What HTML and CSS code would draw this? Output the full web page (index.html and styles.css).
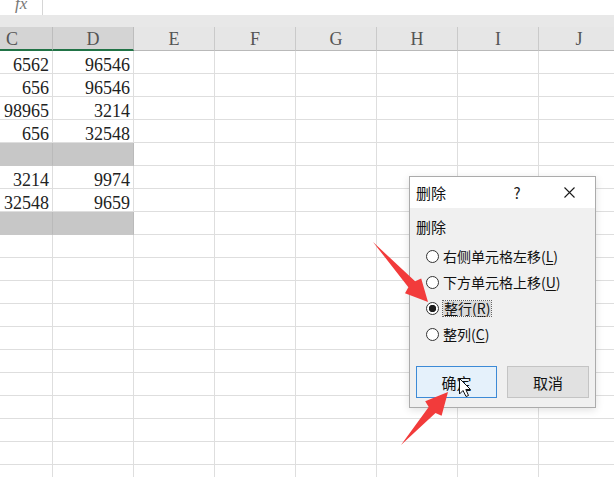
FILE: index.html
```html
<!DOCTYPE html>
<html lang="zh-CN">
<head>
<meta charset="utf-8">
<title>删除</title>
<link rel="stylesheet" href="styles.css">
</head>
<body>
<div class="fbar">
  <div class="fxbox"><span class="fx">fx</span></div>
  <div class="finput"></div>
</div>
<div class="strip"></div>
<div class="sheet">
  <div class="row head">
    <div class="h sel">C</div><div class="h sel">D</div><div class="h">E</div><div class="h">F</div><div class="h">G</div><div class="h">H</div><div class="h">I</div><div class="h">J</div>
  </div>
  <div class="row"><div class="cell">6562</div><div class="cell">96546</div><div class="cell"></div><div class="cell"></div><div class="cell"></div><div class="cell"></div><div class="cell"></div><div class="cell"></div></div>
  <div class="row"><div class="cell">656</div><div class="cell">96546</div><div class="cell"></div><div class="cell"></div><div class="cell"></div><div class="cell"></div><div class="cell"></div><div class="cell"></div></div>
  <div class="row"><div class="cell">98965</div><div class="cell">3214</div><div class="cell"></div><div class="cell"></div><div class="cell"></div><div class="cell"></div><div class="cell"></div><div class="cell"></div></div>
  <div class="row"><div class="cell">656</div><div class="cell">32548</div><div class="cell"></div><div class="cell"></div><div class="cell"></div><div class="cell"></div><div class="cell"></div><div class="cell"></div></div>
  <div class="row"><div class="cell gray"></div><div class="cell gray"></div><div class="cell"></div><div class="cell"></div><div class="cell"></div><div class="cell"></div><div class="cell"></div><div class="cell"></div></div>
  <div class="row"><div class="cell">3214</div><div class="cell">9974</div><div class="cell"></div><div class="cell"></div><div class="cell"></div><div class="cell"></div><div class="cell"></div><div class="cell"></div></div>
  <div class="row"><div class="cell">32548</div><div class="cell">9659</div><div class="cell"></div><div class="cell"></div><div class="cell"></div><div class="cell"></div><div class="cell"></div><div class="cell"></div></div>
  <div class="row"><div class="cell gray"></div><div class="cell gray"></div><div class="cell"></div><div class="cell"></div><div class="cell"></div><div class="cell"></div><div class="cell"></div><div class="cell"></div></div>
  <div class="row"><div class="cell"></div><div class="cell"></div><div class="cell"></div><div class="cell"></div><div class="cell"></div><div class="cell"></div><div class="cell"></div><div class="cell"></div></div>
  <div class="row"><div class="cell"></div><div class="cell"></div><div class="cell"></div><div class="cell"></div><div class="cell"></div><div class="cell"></div><div class="cell"></div><div class="cell"></div></div>
  <div class="row"><div class="cell"></div><div class="cell"></div><div class="cell"></div><div class="cell"></div><div class="cell"></div><div class="cell"></div><div class="cell"></div><div class="cell"></div></div>
  <div class="row"><div class="cell"></div><div class="cell"></div><div class="cell"></div><div class="cell"></div><div class="cell"></div><div class="cell"></div><div class="cell"></div><div class="cell"></div></div>
  <div class="row"><div class="cell"></div><div class="cell"></div><div class="cell"></div><div class="cell"></div><div class="cell"></div><div class="cell"></div><div class="cell"></div><div class="cell"></div></div>
  <div class="row"><div class="cell"></div><div class="cell"></div><div class="cell"></div><div class="cell"></div><div class="cell"></div><div class="cell"></div><div class="cell"></div><div class="cell"></div></div>
  <div class="row"><div class="cell"></div><div class="cell"></div><div class="cell"></div><div class="cell"></div><div class="cell"></div><div class="cell"></div><div class="cell"></div><div class="cell"></div></div>
  <div class="row"><div class="cell"></div><div class="cell"></div><div class="cell"></div><div class="cell"></div><div class="cell"></div><div class="cell"></div><div class="cell"></div><div class="cell"></div></div>
  <div class="row"><div class="cell"></div><div class="cell"></div><div class="cell"></div><div class="cell"></div><div class="cell"></div><div class="cell"></div><div class="cell"></div><div class="cell"></div></div>
  <div class="row"><div class="cell"></div><div class="cell"></div><div class="cell"></div><div class="cell"></div><div class="cell"></div><div class="cell"></div><div class="cell"></div><div class="cell"></div></div>
  <div class="row"><div class="cell"></div><div class="cell"></div><div class="cell"></div><div class="cell"></div><div class="cell"></div><div class="cell"></div><div class="cell"></div><div class="cell"></div></div>
</div>

<div class="dlg">
  <div class="tbar">
    <span class="ttl">删除</span>
    <span class="q">?</span>
    <span class="close"><svg width="11" height="11" viewBox="0 0 11 11"><path d="M0.5 0.5 L10.5 10.5 M10.5 0.5 L0.5 10.5" stroke="#1a1a1a" stroke-width="1.1" fill="none"/></svg></span>
  </div>
  <div class="dbody">
    <div class="glabel">删除</div>
    <div class="opts">
      <div class="opt"><span class="radio"></span><span class="otxt">右侧单元格左移(<u>L</u>)</span></div>
      <div class="opt"><span class="radio"></span><span class="otxt">下方单元格上移(<u>U</u>)</span></div>
      <div class="opt"><span class="radio on"></span><span class="otxt focus">整行(<u>R</u>)</span></div>
      <div class="opt"><span class="radio"></span><span class="otxt">整列(<u>C</u>)</span></div>
    </div>
    <div class="btns">
      <div class="btn ok">确定</div>
      <div class="btn cancel">取消</div>
    </div>
  </div>
</div>

<svg class="overlay" width="614" height="477" viewBox="0 0 614 477">
  <polygon points="373,242 415.1,281.3 421.2,278.4 428,302 405,293.2 408.4,287.3" fill="#f23b3b"/>
  <polygon points="401,445 428.7,407 425.2,401.2 448,392 441.6,415.8 435.5,413" fill="#f23b3b"/>
  <polygon points="459.5,378.5 459.5,394 463,390.5 466,396.5 468.5,395.5 465.8,389.5 470.5,389.5" fill="#ffffff" stroke="#111" stroke-width="1" stroke-linejoin="round"/>
</svg>
</body>
</html>
```

FILE: styles.css
```css
html, body {
  margin: 0;
  padding: 0;
}
body {
  width: 614px;
  height: 477px;
  overflow: hidden;
  position: relative;
  background: #ffffff;
}

.fbar {
  height: 15px;
  display: flex;
  background: #ffffff;
}
.fxbox {
  width: 43px;
  border-right: 1px solid #d6d6d6;
  overflow: hidden;
  padding-left: 15px;
  box-sizing: border-box;
}
.fx {
  display: block;
  font-family: "Liberation Serif", serif;
  font-style: italic;
  font-size: 17px;
  line-height: 8px;
  color: #777777;
}
.finput {
  flex: 1;
}
.strip {
  height: 12px;
  background: #e8e8e8;
}

.sheet {
  margin-left: -28px;
}
.row {
  display: grid;
  grid-template-columns: repeat(8, 81px);
  height: 23px;
}
.head {
  height: 24px;
  background: #e6e6e6;
}
.h {
  box-sizing: border-box;
  height: 24px;
  border-right: 1px solid #cacaca;
  border-bottom: 1px solid #b9b9b9;
  text-align: center;
  font-family: "Liberation Serif", serif;
  font-size: 18px;
  line-height: 25px;
  color: #555555;
  overflow: hidden;
}
.h.sel {
  background: #d4d4d4;
  border-right-color: #bdbdbd;
  border-bottom: 2px solid #217346;
}

.cell {
  box-sizing: border-box;
  height: 23px;
  border-right: 1px solid #dedede;
  border-bottom: 1px solid #dedede;
  text-align: right;
  padding: 6px 3px 0 0;
  font-family: "Liberation Serif", serif;
  font-size: 18px;
  line-height: 16px;
  color: #222222;
  overflow: hidden;
}
.cell.gray {
  background: #c7c7c7;
  border-right-color: #bababa;
  border-bottom-color: #c7c7c7;
}

.dlg {
  position: absolute;
  left: 409px;
  top: 176px;
  width: 187px;
  height: 232px;
  box-sizing: border-box;
  border: 1px solid #ababab;
  background: #f0f0f0;
  display: flex;
  flex-direction: column;
  font-family: "Noto Sans CJK SC", "Noto Sans", sans-serif;
  color: #111111;
  box-shadow: 0 2px 8px rgba(0, 0, 0, 0.12);
}
.tbar {
  height: 31px;
  background: #ffffff;
  display: flex;
  align-items: center;
  padding-left: 6px;
  padding-right: 11px;
  font-size: 15px;
}
.ttl {
  flex: 1;
}
.q {
  width: 20px;
  text-align: center;
  color: #222222;
}
.close {
  width: 30px;
  margin-left: 27px;
  display: flex;
  justify-content: center;
  align-items: center;
}
.dbody {
  flex: 1;
  padding: 0 6px;
  display: flex;
  flex-direction: column;
}
.glabel {
  margin-top: 9px;
  font-size: 15px;
  line-height: 20px;
}
.opts {
  margin-top: 6px;
  display: flex;
  flex-direction: column;
}
.opt {
  height: 26px;
  display: flex;
  align-items: center;
  padding-left: 10px;
  gap: 4px;
  font-size: 14px;
}
.radio {
  width: 13px;
  height: 13px;
  box-sizing: border-box;
  border: 1px solid #333333;
  border-radius: 50%;
  background: #ffffff;
  flex: none;
}
.radio.on {
  background: radial-gradient(circle, #1e1e1e 0 3.4px, #ffffff 4px);
}
.otxt {
  line-height: 20px;
  white-space: nowrap;
}
.otxt u {
  text-underline-offset: 2px;
}
.otxt.focus {
  display: inline-block;
  height: 15px;
  line-height: 15px;
  padding: 0 1px;
  background: #dadada;
  outline: 1px dotted #666666;
}
.btns {
  margin-top: 19px;
  display: flex;
  gap: 10px;
}
.btn {
  height: 32px;
  box-sizing: border-box;
  display: flex;
  align-items: center;
  justify-content: center;
  font-size: 15px;
}
.btn.ok {
  width: 82px;
  background: #e5f1fb;
  border: 1px solid #3d8ad6;
}
.btn.cancel {
  width: 83px;
  background: #e1e1e1;
  border: 1px solid #c4c4c4;
}

.overlay {
  position: absolute;
  left: 0;
  top: 0;
  pointer-events: none;
}
```
